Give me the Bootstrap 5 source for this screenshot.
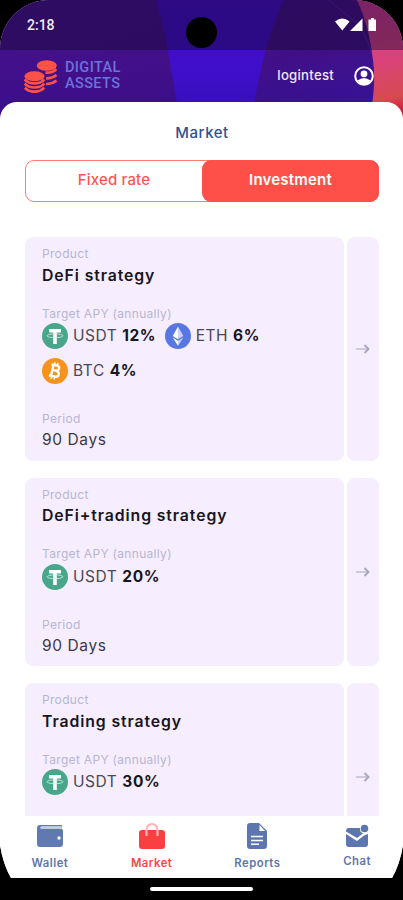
<!DOCTYPE html>
<html lang="en">
<head>
<meta charset="utf-8">
<meta name="viewport" content="width=device-width, initial-scale=1">
<title>Digital Assets – Market</title>
<link href="https://cdn.jsdelivr.net/npm/bootstrap@5.3.0/dist/css/bootstrap.min.css" rel="stylesheet">
<style>
body{font-family:Inter,Roboto,sans-serif;background:#000;height:900px;overflow:hidden;margin:0}
svg{display:block;flex:none}
.phone{height:878px;border-radius:49px 49px 0 0;overflow:hidden;position:relative;background:#fff;clip-path:path("M0 0H403V845Q400 864 392 878H11Q3 864 0 845Z")}
.backdrop{position:absolute;left:0;top:0}
.status{height:50px;padding:0 26px 0 27px;color:#f1eafa;font:500 14px/50px Roboto,sans-serif;letter-spacing:0}
.camera{position:absolute;left:186px;top:17px;width:31px;height:31px;border-radius:50%;background:#000}
.topbar{height:52px;padding:0 29px 0 24px}
.brand-name{font:500 14.5px/16px Roboto,sans-serif;color:#6d72dc;margin-left:8px;letter-spacing:.4px}
.brand-name span{display:block}
.user{font-size:13.2px;color:#eee9fb;letter-spacing:.25px;font-weight:500;margin-right:20px}
.sheet{background:#fff;border-radius:17px 17px 0 0;padding:0 24px 0 25px;min-height:0;overflow:hidden}
.heading{font-size:15px;line-height:20px;padding-top:20.500px;color:#314f92;font-weight:500;letter-spacing:.55px}
.switch{height:42px;margin-top:17.500px;border:1px solid #ff7a75;border-radius:9px}
.switch .btn{border:0;border-radius:9px;font-size:15px;letter-spacing:.15px;padding:0 0 1px;color:#fa5753;width:50%;font-weight:500}
.switch .on{background:#ff4f49;color:#fff;margin:-1px -1px -1px 0;width:calc(50% + 1px);font-weight:600;letter-spacing:.2px}
.offers{margin-top:35px}
.offer{gap:3px;margin-bottom:17px}
.pane,.go{background:#f6eeff;border-radius:8px}
.pane{padding:10px 17px 9.500px;min-height:188px}
.go{width:32px;flex:none;color:#c9c5dc}
.cap{font-size:12px;line-height:14px;color:#b7b5d2;letter-spacing:.32px}
.ttl{font-size:15.800px;line-height:22px;font-weight:600;color:#17151d;letter-spacing:.9px;margin-top:3.500px}
.apy{margin-top:20px}
.term{margin-top:28px}
.rates{margin-top:2.500px;gap:9px 8.500px;line-height:26px;font-size:15.500px;letter-spacing:.55px;color:#4a4752}
.rates b{color:#17151d;font-weight:700;font-size:15.500px}
.rate{gap:5px}
.val{font-size:15.500px;line-height:22px;color:#3b3843;margin-top:3px;letter-spacing:.6px}
.tabs{height:62px;background:#fff;padding:7px 0 0;flex:none}
.tab{color:#5d75ad;font-size:11.300px;font-weight:600;letter-spacing:.5px;line-height:14px}
.tab svg{margin-bottom:6.500px}
.tab-a{width:100px}.tab-b{width:104px}.tab-c{width:108px}.tab-d{width:92px}
.on-tab{color:#fb4745}
.homebar{width:103px;height:4px;border-radius:2px;background:#fff;margin:9px auto 0}
</style>
</head>
<body>
<svg width="0" height="0" class="position-absolute">
<symbol id="usdt" viewBox="0 0 26 26"><circle cx="13" cy="13" r="13" fill="#48a68b"/><path d="M7 6h12v3.600h-4.200V21h-3.600V9.600H7z" fill="#fff"/><ellipse cx="13" cy="12.800" rx="8" ry="1.900" fill="none" stroke="#d8efe7" stroke-width=".8"/></symbol>
<symbol id="eth" viewBox="0 0 26 26"><circle cx="13" cy="13" r="13" fill="#5877e3"/><path d="M13 3.500v12.800l-5.300-3.200z" fill="#fff"/><path d="M13 3.500l5.300 9.600-5.300 3.200z" fill="#c9d3fa"/><path d="M7.700 14.600l5.300 3.200v5z" fill="#fff"/><path d="M18.300 14.600l-5.300 3.200v5z" fill="#c9d3fa"/></symbol>
<symbol id="btc" viewBox="0 0 26 26"><circle cx="13" cy="13" r="13" fill="#f7931a"/><g transform="rotate(13 13 13)" fill="none" stroke="#fff"><path d="M8 7.300h5.800a2.500 2.500 0 010 5.200H10M13.500 12.700h1a2.800 2.800 0 010 5.800H8M10.200 7.300v11" stroke-width="2.400"/><path d="M11 4.500v3M14 4.500v3M11 18.500v3M14 18.500v3" stroke-width="1.600"/></g></symbol>
<symbol id="arrow" viewBox="0 0 14 10"><path d="M0 5h12" stroke="currentColor" stroke-width="1.800"/><path d="M8.500 1L12.500 5 8.500 9" fill="none" stroke="#a9a5bf" stroke-width="1.900"/></symbol>
</svg>
<div class="phone d-flex flex-column">
  <svg class="backdrop" width="403" height="130" viewBox="0 0 403 130">
    <defs>
      <linearGradient id="base" x2="1" y2="1"><stop offset="0" stop-color="#43118f"/><stop offset=".55" stop-color="#410f87"/><stop offset="1" stop-color="#37169c"/></linearGradient>
      <linearGradient id="beam" x2="0" y2="1"><stop offset="0" stop-color="#430dca"/><stop offset="1" stop-color="#3d10cb"/></linearGradient>
      <linearGradient id="glow" gradientUnits="userSpaceOnUse" x1="365" y1="0" x2="395" y2="120"><stop offset="0" stop-color="#cd3794"/><stop offset=".5" stop-color="#d9437a"/><stop offset=".82" stop-color="#d64a50"/><stop offset="1" stop-color="#c70b3a"/></linearGradient>
      <linearGradient id="low" x2="0" y2="1"><stop offset="0" stop-color="#260b90" stop-opacity="0"/><stop offset="1" stop-color="#260b90" stop-opacity=".35"/></linearGradient>
    </defs>
    <path fill="url(#base)" d="M0 0h403v130H0z"/>
    <path fill="url(#beam)" d="M156 0h127q-15 38-20 60l-12 56h-72l-8-48Q165 30 156 0z"/>
    <path fill="url(#low)" d="M0 70h372v50H0z"/>
    <path fill="url(#glow)" d="M357 0h46v130h-36q10-40 6-70Q369 25 357 0z"/>
    <path d="M329 0q10 10 23 19 14 14 20 34" stroke="#5b23ad" fill="none"/>
    <path fill="#130629" fill-opacity=".43" d="M0 0h403v50H0z"/>
  </svg>
  <div class="camera"></div>
  <div class="status position-relative d-flex justify-content-between align-items-center flex-shrink-0">
    <span>2:18</span>
    <svg width="42" height="14" viewBox="0 0 42 14" fill="#fff"><path d="M0 3.500Q7.300-2.500 14.600 3.500L7.300 12.500z"/><path d="M27.500.5V13H15z"/><path d="M36 0h3v1.500h2V13h-7.500V1.500H36z"/></svg>
  </div>
  <div class="topbar position-relative d-flex align-items-center flex-shrink-0">
    <svg width="33" height="33" viewBox="0 0 33 33">
      <g fill="#ff5246"><ellipse cx="22.800" cy="5.500" rx="10" ry="5.300"/><ellipse cx="10.500" cy="16.200" rx="10" ry="5"/></g>
      <g fill="none" stroke="#ff5246" stroke-width="2.700">
        <path d="M21.500 12.700Q29 13 32.400 9.200M22 18.400q7-.1 10.400-3.500M22 24q7-.1 10.400-3.500"/>
        <path d="M.6 19.300q3.400 4 9.900 4t9.900-4M.6 23.500q3.400 4 9.900 4t9.900-4M.8 27.700q3.400 4 9.700 4t9.700-4"/>
      </g>
    </svg>
    <div class="brand-name"><span>DIGITAL</span><span>ASSETS</span></div>
    <span class="user ms-auto">logintest</span>
    <svg width="20" height="20" viewBox="0 0 20 20"><circle cx="10" cy="10" r="8.800" fill="none" stroke="#fff" stroke-width="2"/><circle cx="10" cy="7.800" r="3.400" fill="#fff"/><path d="M3.500 14.500Q10 9.500 16.500 14.500L14 17.500q-4 2-8 0z" fill="#fff"/></svg>
  </div>
  <main class="sheet flex-grow-1 position-relative">
    <h1 class="heading text-center mb-0">Market</h1>
    <div class="switch d-flex"><button class="btn">Fixed rate</button><button class="btn on">Investment</button></div>
    <div class="offers">
      <div class="offer d-flex">
        <div class="pane flex-grow-1">
          <div class="cap">Product</div><div class="ttl">DeFi strategy</div>
          <div class="cap apy">Target APY (annually)</div>
          <div class="rates d-flex flex-wrap">
            <div class="rate d-flex"><svg width="26" height="26"><use href="#usdt"/></svg><span>USDT <b>12%</b></span></div>
            <div class="rate d-flex"><svg width="26" height="26"><use href="#eth"/></svg><span>ETH <b>6%</b></span></div>
            <div class="rate d-flex w-100"><svg width="26" height="26"><use href="#btc"/></svg><span>BTC <b>4%</b></span></div>
          </div>
          <div class="cap term">Period</div><div class="val">90 Days</div>
        </div>
        <div class="go d-flex align-items-center justify-content-center"><svg width="14" height="10"><use href="#arrow"/></svg></div>
      </div>
      <div class="offer d-flex">
        <div class="pane flex-grow-1">
          <div class="cap">Product</div><div class="ttl">DeFi+trading strategy</div>
          <div class="cap apy">Target APY (annually)</div>
          <div class="rates d-flex"><div class="rate d-flex"><svg width="26" height="26"><use href="#usdt"/></svg><span>USDT <b>20%</b></span></div></div>
          <div class="cap term">Period</div><div class="val">90 Days</div>
        </div>
        <div class="go d-flex align-items-center justify-content-center"><svg width="14" height="10"><use href="#arrow"/></svg></div>
      </div>
      <div class="offer d-flex">
        <div class="pane flex-grow-1">
          <div class="cap">Product</div><div class="ttl">Trading strategy</div>
          <div class="cap apy">Target APY (annually)</div>
          <div class="rates d-flex"><div class="rate d-flex"><svg width="26" height="26"><use href="#usdt"/></svg><span>USDT <b>30%</b></span></div></div>
        </div>
        <div class="go d-flex align-items-center justify-content-center"><svg width="14" height="10"><use href="#arrow"/></svg></div>
      </div>
    </div>
  </main>
  <nav class="tabs d-flex">
    <div class="tab tab-a d-flex flex-column align-items-center">
      <svg width="26" height="26" viewBox="0 0 26 26"><path d="M3 2h22v1.500H5q-1.500 0-1.500 1t1.500 1h18q3 0 3 2.500v13q0 3-3 3H3q-3 0-3-3V5q0-3 3-3z" fill="#6179b3"/><path d="M4 3.500h21v2.200H4.500q-1.300 0-1.300-1z" fill="#c5cee3"/><circle cx="22" cy="15" r="1.700" fill="#fff"/></svg>
      <span>Wallet</span>
    </div>
    <div class="tab tab-b on-tab d-flex flex-column align-items-center">
      <svg width="26" height="26" viewBox="0 0 26 26"><path d="M3 7h20q3 0 3 3v13q0 3-3 3H3q-3 0-3-3V10q0-3 3-3z" fill="#fa3f40"/><path d="M7.500 13V7.500Q8 1.200 13 1.200t5.500 6.300V13" fill="none" stroke="#ffb9b8" stroke-width="2.200"/></svg>
      <span>Market</span>
    </div>
    <div class="tab tab-c d-flex flex-column align-items-center">
      <svg width="20" height="26" viewBox="0 0 20 26"><path d="M3 0h9l8 8v15q0 3-3 3H3q-3 0-3-3V3q0-3 3-3z" fill="#5e76b0"/><path d="M12.500 2v6H18z" fill="#fff"/><path d="M4 13.500h12M4 17.500h12M4 21.200h8" stroke="#fff" stroke-width="1.500"/></svg>
      <span>Reports</span>
    </div>
    <div class="tab tab-d d-flex flex-column align-items-center">
      <svg width="23" height="24" viewBox="0 0 23 24"><path d="M0 8q0-3 3-3h11q-.5 4 3 5.500L11 15 0 8.500zM0 11l11 7 7-5.500 4-1.500v10q0 3-3 3H3q-3 0-3-3z" fill="#5e76b0"/><circle cx="18.500" cy="5.500" r="3.800" fill="#5e76b0"/></svg>
      <span>Chat</span>
    </div>
  </nav>
</div>
<div class="homebar"></div>
<script src="https://cdn.jsdelivr.net/npm/bootstrap@5.3.0/dist/js/bootstrap.bundle.min.js"></script>
</body>
</html>
